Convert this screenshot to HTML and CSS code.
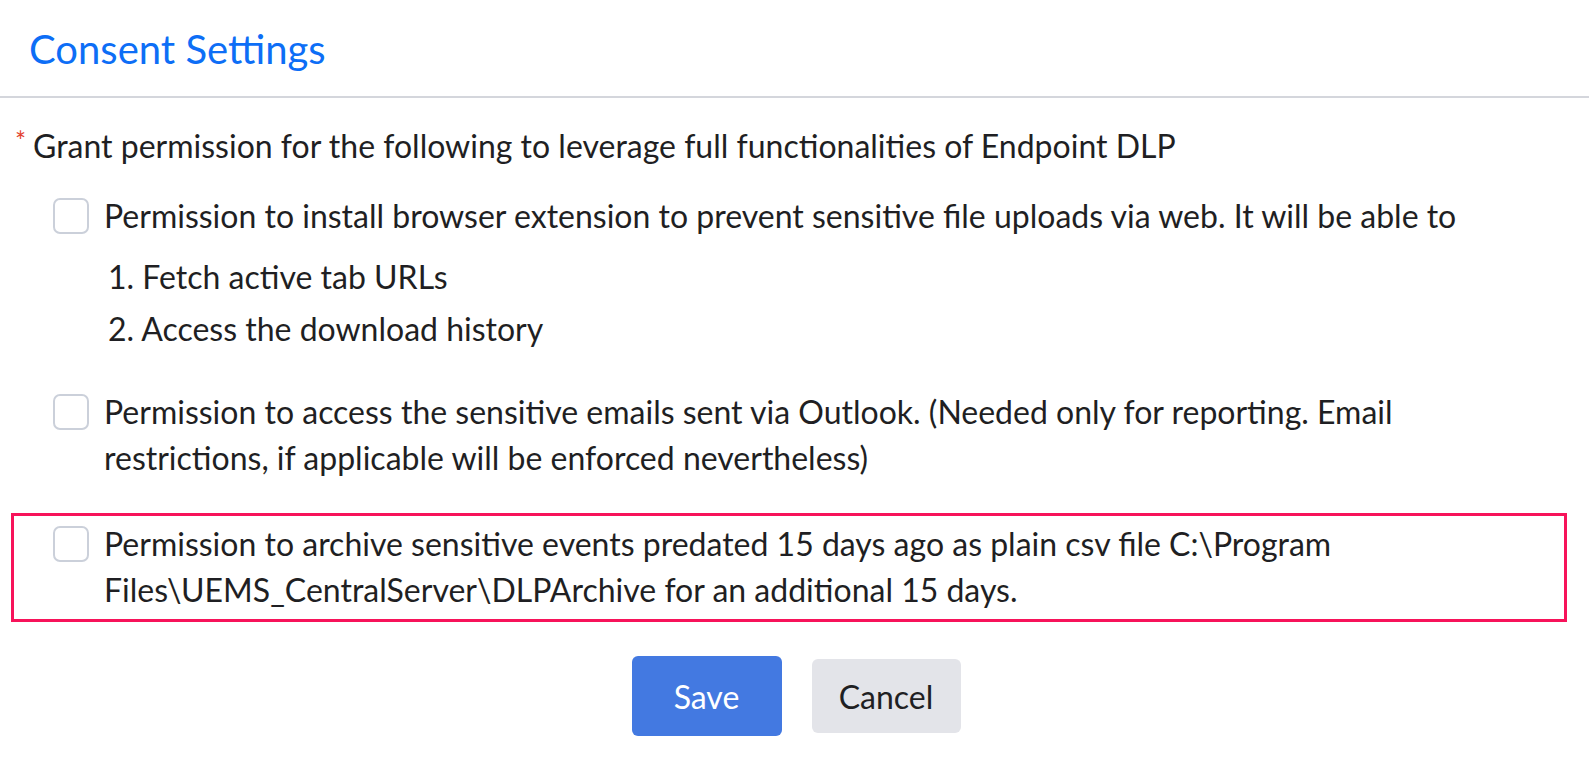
FILE: index.html
```html
<!DOCTYPE html>
<html lang="en">
<head>
<meta charset="utf-8">
<title>Consent Settings</title>
<link rel="stylesheet" href="styles.css">
</head>
<body>
<div class="dialog">
  <header class="dialog-header">
    <h1 class="dialog-title">Consent Settings</h1>
  </header>
  <main class="dialog-body">
    <p class="intro"><span class="req">*</span>Grant permission for the following to leverage full functionalities of Endpoint DLP</p>

    <div class="option option-first">
      <span class="checkbox"></span>
      <div class="option-text">Permission to install browser extension to prevent sensitive file uploads via web. It will be able to</div>
    </div>
    <div class="sublist">
      <div class="subitem">1. Fetch active tab URLs</div>
      <div class="subitem">2. Access the download history</div>
    </div>

    <div class="option option-second">
      <span class="checkbox"></span>
      <div class="option-text">Permission to access the sensitive emails sent via Outlook. (Needed only for reporting. Email restrictions, if applicable will be enforced nevertheless)</div>
    </div>

    <div class="option option-highlight">
      <span class="checkbox"></span>
      <div class="option-text">Permission to archive sensitive events predated 15 days ago as plain csv file C:\Program Files\UEMS_CentralServer\DLPArchive for an additional 15 days.</div>
    </div>

    <div class="actions">
      <button class="btn btn-primary" type="button">Save</button>
      <button class="btn btn-secondary" type="button">Cancel</button>
    </div>
  </main>
</div>
</body>
</html>
```

FILE: styles.css
```css
* { box-sizing: border-box; }

html, body {
  margin: 0;
  padding: 0;
  background: #ffffff;
}

body {
  font-family: Lato, "Open Sans", "Liberation Sans", sans-serif;
  color: #1f1f23;
  font-size: 32px;
}

.dialog {
  width: 1589px;
}

.dialog-header {
  height: 98px;
  border-bottom: 2px solid #d4d6dc;
  padding: 0 29px;
  display: flex;
  align-items: center;
}

.dialog-title {
  margin: 0;
  font-size: 40px;
  font-weight: 400;
  color: #0d6ef6;
  line-height: 46px;
  padding-top: 2px;
}

.dialog-body {
  padding: 20px 22px 0 11px;
}

.intro {
  margin: 0;
  line-height: 46px;
  padding-left: 4px;
}

.req {
  color: #e2412e;
  font-size: 26px;
  vertical-align: 7px;
  margin-right: 7px;
}

.option {
  display: flex;
  align-items: flex-start;
  gap: 15px;
  line-height: 46px;
  padding-left: 42px;
}

.option-first {
  margin-top: 24px;
}

.option-second {
  margin-top: 34px;
}

.option-highlight {
  margin-top: 32px;
  border: 3px solid #f7135a;
  padding: 5px 20px 6px 39px;
}

.checkbox {
  flex: 0 0 auto;
  width: 36px;
  height: 36px;
  margin-top: 5px;
  border: 2px solid #cbd0da;
  border-radius: 7px;
  background: #fff;
}

.option-text {
  flex: 1 1 auto;
  max-width: 1420px;
}

.sublist {
  margin-top: 12px;
  padding-left: 97px;
}

.subitem {
  line-height: 52px;
}

.actions {
  display: flex;
  justify-content: center;
  align-items: center;
  gap: 30px;
  margin-top: 34px;
  padding-left: 14px;
}

.btn {
  font-family: inherit;
  font-size: 32px;
  border: none;
  border-radius: 6px;
  cursor: pointer;
  color: #1f1f23;
}

.btn-primary {
  width: 150px;
  height: 80px;
  background: #4379e1;
  color: #ffffff;
}

.btn-secondary {
  width: 149px;
  height: 74px;
  background: #e3e4e9;
}
```
